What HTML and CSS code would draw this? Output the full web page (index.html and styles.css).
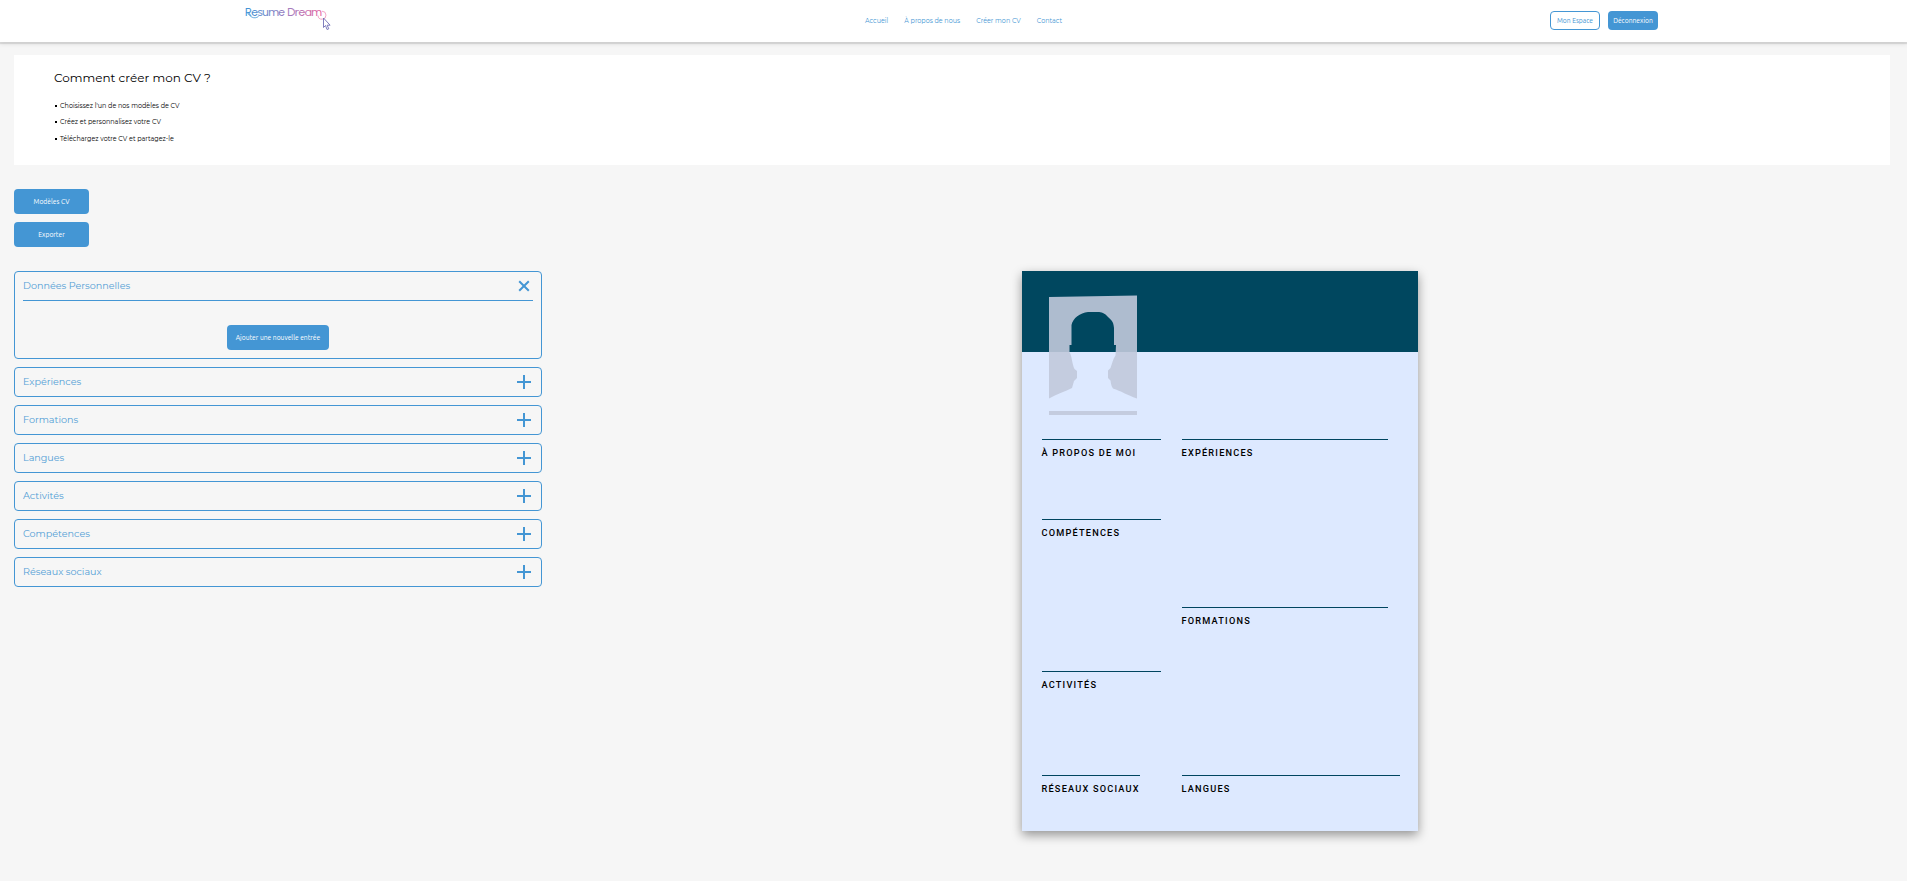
FILE: index.html
```
<!DOCTYPE html>
<html lang="fr">
<head>
<meta charset="utf-8">
<title>Resume Dream</title>
<link rel="stylesheet" href="styles.css">
</head>
<body>
<header class="header">
  <a class="logo">
    <svg class="logo-svg" width="88" height="28" viewBox="0 0 88 28">
      <defs><linearGradient id="brand" gradientUnits="userSpaceOnUse" x1="0" y1="0" x2="84" y2="0"><stop offset="0" stop-color="#3d95d6"/><stop offset=".55" stop-color="#a57cbd"/><stop offset="1" stop-color="#f0609c"/></linearGradient></defs>
      <text class="logo-text" x="1" y="15.500" textLength="77" fill="url(#brand)">Resume Dream</text>
      <path d="M3 12C6 17 10 19.500 14.500 16.500" fill="none" stroke="#55a0da" stroke-width=".9"/>
      <path d="M74 15.500a4 4 0 1 0 4-4.300" fill="none" stroke="#ef8db8" stroke-width=".8"/>
      <path d="M79.500 18v9.500l2-2 1.500 4 1.800-.7-1.700-3.600h3z" fill="#fff" stroke="#716fb5" stroke-width=".9"/>
    </svg>
  </a>
  <nav class="nav"><a>Accueil</a><a>À propos de nous</a><a>Créer mon CV</a><a>Contact</a></nav>
  <div class="account"><button class="btn btn-outline">Mon Espace</button><button class="btn btn-small">Déconnexion</button></div>
</header>
<main class="main">
  <section class="intro">
    <h1 class="intro-title">Comment créer mon CV ?</h1>
    <ul class="steps"><li>Choisissez l'un de nos modèles de CV</li><li>Créez et personnalisez votre CV</li><li>Téléchargez votre CV et partagez-le</li></ul>
  </section>
  <div class="actions"><button class="btn">Modèles CV</button><button class="btn">Exporter</button></div>
  <div class="workspace">
    <div class="accordion">
      <section class="panel panel-open">
        <div class="panel-head"><span>Données Personnelles</span><svg class="icon" width="14" height="14" viewBox="0 0 14 14"><path d="M2.200 2.200l9.600 9.600M11.800 2.200l-9.600 9.600"/></svg></div>
        <div class="panel-body"><button class="btn btn-add">Ajouter une nouvelle entrée</button></div>
      </section>
      <section class="panel"><div class="panel-head"><span>Expériences</span><svg class="icon" width="14" height="14" viewBox="0 0 14 14"><path d="M0 7h14M7 0v14"/></svg></div></section>
      <section class="panel"><div class="panel-head"><span>Formations</span><svg class="icon" width="14" height="14" viewBox="0 0 14 14"><path d="M0 7h14M7 0v14"/></svg></div></section>
      <section class="panel"><div class="panel-head"><span>Langues</span><svg class="icon" width="14" height="14" viewBox="0 0 14 14"><path d="M0 7h14M7 0v14"/></svg></div></section>
      <section class="panel"><div class="panel-head"><span>Activités</span><svg class="icon" width="14" height="14" viewBox="0 0 14 14"><path d="M0 7h14M7 0v14"/></svg></div></section>
      <section class="panel"><div class="panel-head"><span>Compétences</span><svg class="icon" width="14" height="14" viewBox="0 0 14 14"><path d="M0 7h14M7 0v14"/></svg></div></section>
      <section class="panel"><div class="panel-head"><span>Réseaux sociaux</span><svg class="icon" width="14" height="14" viewBox="0 0 14 14"><path d="M0 7h14M7 0v14"/></svg></div></section>
    </div>
    <article class="cv">
      <svg class="photo" width="88" height="121" viewBox="0 0 88 121">
        <path fill="#c1c9db" fill-opacity=".9" fill-rule="evenodd" d="M0 2L88 .5V103.500C78 100 72 96 64 93.500C62 91 62 88 61.500 85.500L59 83V75.500L61.500 73C63 69 64 64 66.500 60.500L67 50H65V33C64.500 26 62 25 59 22C56 18 52 17 49 17H39C31 18 24 23 22.500 30V50H20.500V57C23 61 23 69 25.500 74L28 76V83L25 86L23 93C15 97 8 99 0 103.500Z"/>
        <path fill="#c1c9db" fill-opacity=".9" d="M0 116H88V120H0Z"/>
      </svg>
      <div class="cv-columns">
        <div class="cv-left">
          <section class="about"><h2>À PROPOS DE MOI</h2></section>
          <section class="skills"><h2>COMPÉTENCES</h2></section>
          <section class="hobbies"><h2>ACTIVITÉS</h2></section>
          <section class="social"><h2>RÉSEAUX SOCIAUX</h2></section>
        </div>
        <div class="cv-right">
          <section class="half"><h2>EXPÉRIENCES</h2></section>
          <section class="half"><h2>FORMATIONS</h2></section>
          <section class="langs"><h2>LANGUES</h2></section>
        </div>
      </div>
    </article>
  </div>
</main>
</body>
</html>
```
FILE: styles.css
```
* { box-sizing: border-box; }
body { margin: 0; min-height: 881px; background: #f6f6f6; color: #000; font-family: Montserrat, Inter, sans-serif; }
h1, h2, ul { margin: 0; padding: 0; font-weight: 400; }

.header { position: relative; display: flex; align-items: flex-start; height: 42px; padding-left: 244px; background: #fff; box-shadow: 0 2px 1px rgba(0, 0, 0, .1), 0 3px 4px rgba(0, 0, 0, .06); }
.logo-svg { display: block; overflow: visible; }
.logo-text { font: 500 12px Urbanist, Inter, sans-serif; }
.nav { display: flex; gap: 16px; margin: 16px 0 0 533px; font-size: 6.4px; line-height: 11px; color: #4496d4; white-space: nowrap; }
.account { display: flex; gap: 8px; margin: 11px 249px 0 auto; }

.btn { display: flex; align-items: center; justify-content: center; width: 75px; height: 25px; padding: 0; border: 0; border-radius: 4px; background: #4496d4; color: #fff; font: 400 6.72px/10px Ubuntu, "Noto Sans", sans-serif; white-space: nowrap; }
.account .btn { width: 50px; height: 19px; }
.account .btn-outline { border: 1px solid #4496d4; background: #fff; color: #4496d4; }

.main { padding: 13px 17px 0 14px; }
.intro { height: 110px; padding: 15px 40px; background: #fff; }
.intro-title { font-size: 12px; line-height: 16px; }
.steps { margin-top: 12px; list-style: none; font-size: 6.4px; letter-spacing: .02px; line-height: 16.300px; }
.steps li { display: flex; align-items: center; gap: 3px; padding-left: 1px; }
.steps li::before { content: ""; width: 2px; height: 2px; background: #000; }
.actions { display: flex; flex-direction: column; gap: 8px; margin-top: 24px; }

.workspace { display: flex; margin-top: 24px; }
.accordion { display: flex; flex-direction: column; gap: 8px; width: 528px; }
.panel { height: 30px; padding: 0 8px; border: 1px solid #4496d4; border-radius: 4px; }
.panel-open { height: 88px; }
.panel-head { display: flex; align-items: center; justify-content: space-between; height: 28px; padding-right: 2px; font-size: 9.6px; color: #4496d4; }
.panel-head span { padding-bottom: 1px; opacity: .92; }
.panel-open .panel-head { height: 29px; border-bottom: 1px solid #4496d4; }
.icon { fill: none; stroke: #4496d4; stroke-width: 2; }
.panel-body { display: flex; justify-content: center; padding-top: 24px; }
.btn-add { width: 102px; }

.cv { width: 396px; height: 560px; margin-left: 480px; padding: 24px 18px 0 20px; background: linear-gradient(#00475f 81px, #dde9ff 81px); box-shadow: 0 4px 10px rgba(0, 0, 0, .4); }
.photo { display: block; margin-left: 7px; }
.cv-columns { display: flex; gap: 21px; margin-top: 23px; }
.cv-left { width: 119px; }
.cv-right { width: 218px; }
.cv h2 { border-top: 1px solid #004560; padding-top: 6px; text-indent: -.5px; font: 500 9.2px/14px Roboto, sans-serif; letter-spacing: 1.200px; white-space: nowrap; }
.about { height: 80px; }
.skills { height: 152px; }
.hobbies { height: 104px; }
.social { width: 98px; }
.half { width: 206px; height: 168px; }
```
